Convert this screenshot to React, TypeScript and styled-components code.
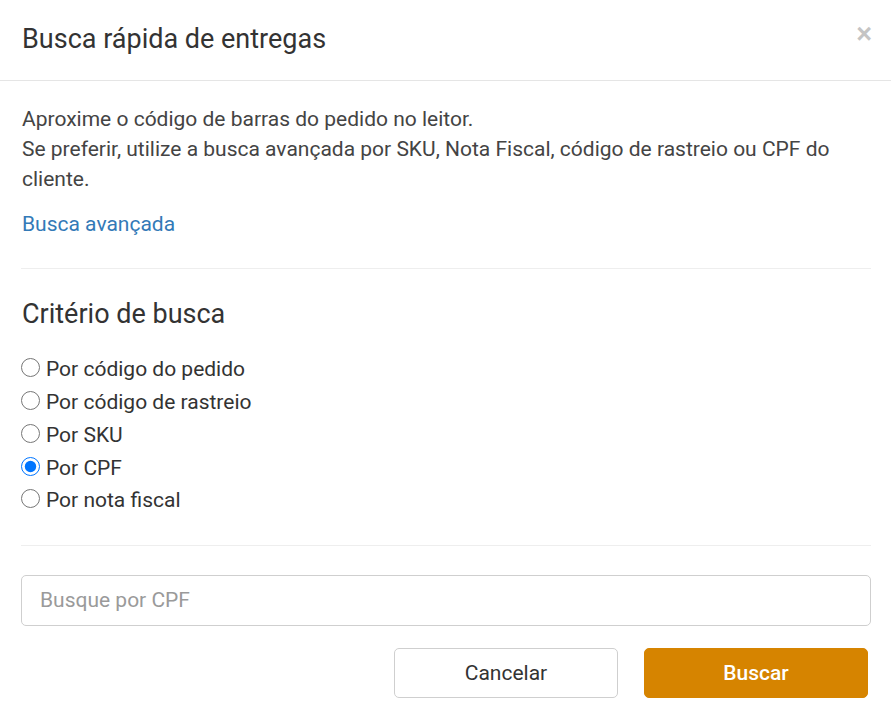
import React, { useState } from "react";
import styled, { createGlobalStyle } from "styled-components";

const Global = createGlobalStyle`
  html, body { margin: 0; padding: 0; background: #ffffff; }
  body { font-family: Roboto, "Noto Sans", Arial, sans-serif; color: #333; }
  * { box-sizing: border-box; }
`;

const Modal = styled.div`
  width: 891px;
  height: 720px;
  background: #fff;
  display: flex;
  flex-direction: column;
`;

const Header = styled.div`
  height: 81px;
  display: flex;
  align-items: center;
  justify-content: space-between;
  padding: 0 22px 2px 22px;
  border-bottom: 1px solid #e5e5e5;
`;

const Title = styled.h4`
  margin: 0;
  font-size: 27px;
  font-weight: 400;
  color: #333;
`;

const Close = styled.button`
  border: 0;
  background: none;
  padding: 0;
  margin: -10px -3px 0 0;
  font-family: "Liberation Sans", Arial, sans-serif;
  font-size: 27px;
  font-weight: 700;
  color: #c4c4c4;
  line-height: 1;
  cursor: pointer;
`;

const Body = styled.div`
  padding: 23px 20px 0 21px;
  display: flex;
  flex-direction: column;
`;

const Text = styled.p`
  margin: 0 0 0 1px;
  font-size: 21px;
  line-height: 30px;
  color: #444;
`;

const Link = styled.a`
  margin: 15px 0 0 1px;
  font-size: 21px;
  line-height: 30px;
  color: #337ab7;
  text-decoration: none;
`;

const Rule = styled.hr<{ $top: number }>`
  margin: ${(p) => p.$top}px 0 0 0;
  border: 0;
  border-top: 1px solid #eeeeee;
  width: 100%;
`;

const SectionTitle = styled.h3`
  margin: 31px 0 0 1px;
  font-size: 27px;
  font-weight: 400;
  line-height: 29px;
  color: #333;
`;

const RadioList = styled.div`
  margin-top: 24px;
  display: flex;
  flex-direction: column;
`;

const RadioRow = styled.label`
  display: flex;
  align-items: center;
  height: 32.75px;
  font-size: 21px;
  color: #333;
  cursor: pointer;
`;

const Radio = styled.input`
  width: 19px;
  height: 19px;
  margin: -3px 6px 0 0;
  accent-color: #0075ff;
`;

const Input = styled.input`
  margin-top: 29px;
  height: 51px;
  width: 100%;
  border: 1px solid #cfcfcf;
  border-radius: 5px;
  padding: 0 18px;
  font-family: Roboto, Arial, sans-serif;
  font-size: 21px;
  color: #333;
  outline: none;
  &::placeholder { color: #9a9a9a; }
`;

const Footer = styled.div`
  margin-top: 22px;
  display: flex;
  justify-content: flex-end;
  gap: 26px;
  padding-right: 3px;
`;

const Button = styled.button<{ $primary?: boolean }>`
  width: 224px;
  height: 50px;
  border-radius: 5px;
  font-family: Roboto, Arial, sans-serif;
  font-size: 21px;
  font-weight: ${(p) => (p.$primary ? 500 : 400)};
  border: 1px solid ${(p) => (p.$primary ? "#d68400" : "#cfcfcf")};
  background: ${(p) => (p.$primary ? "#d68400" : "#fff")};
  color: ${(p) => (p.$primary ? "#fff" : "#333")};
  cursor: pointer;
`;

const options = [
  "Por código do pedido",
  "Por código de rastreio",
  "Por SKU",
  "Por CPF",
  "Por nota fiscal",
];

export default function App() {
  const [sel, setSel] = useState("Por CPF");
  return (
    <>
      <Global />
      <Modal>
        <Header>
          <Title>Busca rápida de entregas</Title>
          <Close aria-label="Fechar">×</Close>
        </Header>
        <Body>
          <Text>
            Aproxime o código de barras do pedido no leitor.
            <br />
            Se preferir, utilize a busca avançada por SKU, Nota Fiscal, código de rastreio ou CPF do cliente.
          </Text>
          <Link href="#">Busca avançada</Link>
          <Rule $top={29} />
          <SectionTitle>Critério de busca</SectionTitle>
          <RadioList>
            {options.map((o) => (
              <RadioRow key={o}>
                <Radio
                  type="radio"
                  name="crit"
                  checked={sel === o}
                  onChange={() => setSel(o)}
                />
                {o}
              </RadioRow>
            ))}
          </RadioList>
          <Rule $top={28} />
          <Input placeholder="Busque por CPF" />
          <Footer>
            <Button>Cancelar</Button>
            <Button $primary>Buscar</Button>
          </Footer>
        </Body>
      </Modal>
    </>
  );
}
